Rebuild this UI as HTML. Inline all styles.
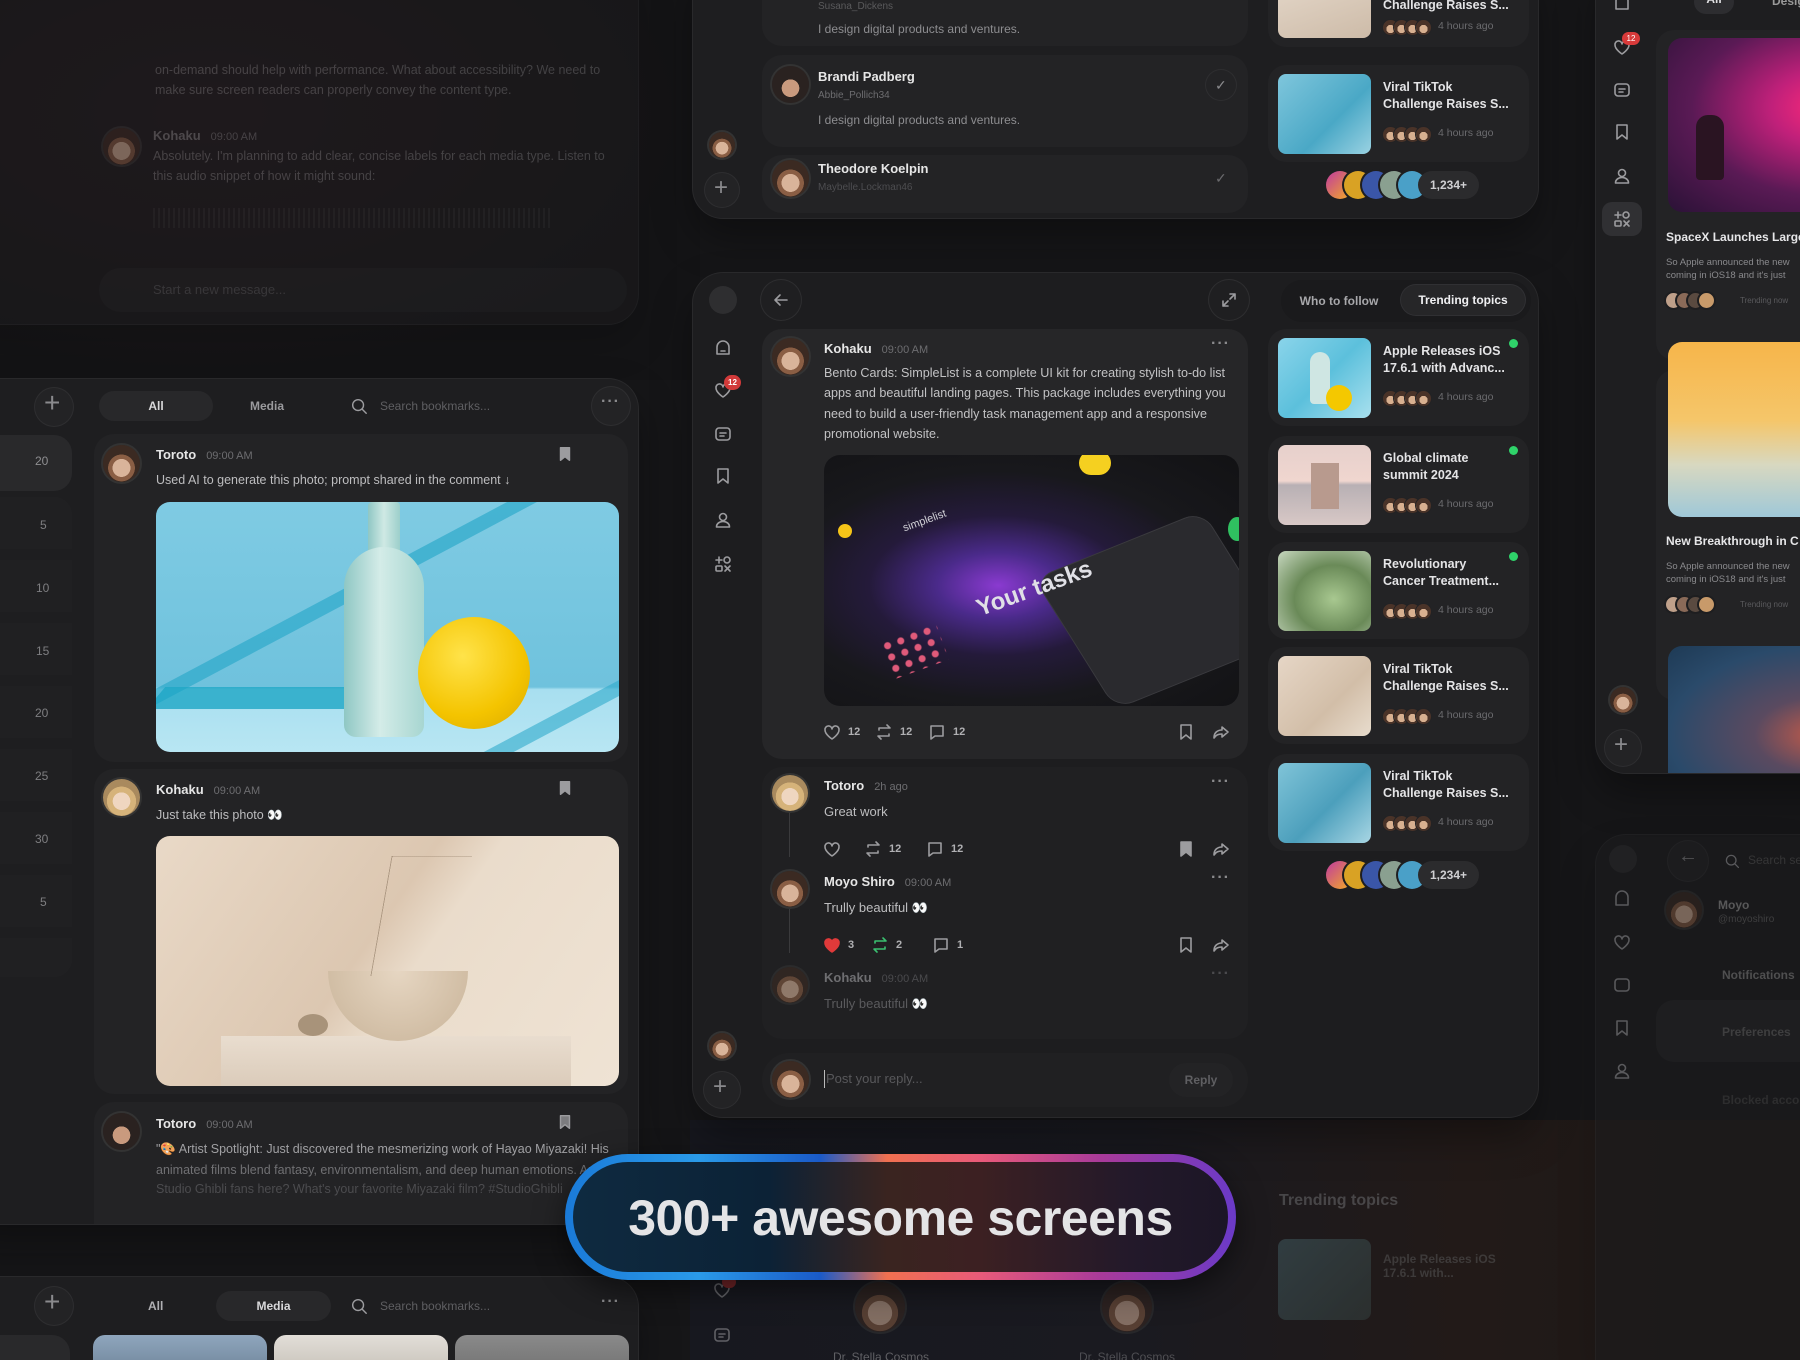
<!DOCTYPE html>
<html><head><meta charset="utf-8"><style>
*{box-sizing:border-box;margin:0;padding:0}
html,body{width:1800px;height:1360px;overflow:hidden;background:#161618}
body{font-family:"Liberation Sans",sans-serif;color:#e8e8e8}
#root{position:relative;width:1800px;height:1360px;overflow:hidden;background:#161618}
.a{position:absolute}
.panel{position:absolute;background:#1e1e20;border-radius:30px;box-shadow:0 0 0 1px #29292b,0 20px 40px rgba(0,0,0,.35)}
.card{position:absolute;background:#262628;border-radius:20px}
.av{position:absolute;border-radius:50%;background:radial-gradient(circle at 50% 62%,#d9b49a 0 30%,#8a5e44 31% 45%,#3b2a22 46%);box-shadow:0 0 0 2px #333}
.av2{background:radial-gradient(circle at 50% 60%,#efd6c0 0 30%,#d6b37a 31% 50%,#a98a5e 51%)}
.av3{background:radial-gradient(circle at 50% 60%,#c99a7e 0 30%,#2a2220 31%)}
.nm{position:absolute;font-size:13px;font-weight:bold;color:#e6e6e6;white-space:nowrap}
.tm{font-weight:normal;color:#6d6d70;font-size:11px;margin-left:10px}
.tx{position:absolute;font-size:13px;color:#bdbdbf;line-height:20px;white-space:nowrap}
.ic{position:absolute;width:20px;height:20px;fill:none;stroke:#9c9c9f;stroke-width:1.6;stroke-linecap:round;stroke-linejoin:round}
.cnt{position:absolute;font-size:11px;font-weight:bold;color:#b0b0b3}
.dots{position:absolute;color:#8a8a8d;font-size:16px;letter-spacing:1px;font-weight:bold}
.circ{position:absolute;border-radius:50%;background:#232325;box-shadow:0 0 0 1px #2e2e30}
.tc{position:absolute;background:#232325;border-radius:18px;width:261px;height:97px}
.th{position:absolute;left:10px;top:9px;width:93px;height:80px;border-radius:8px}
.tt{position:absolute;left:115px;top:14px;font-size:12.5px;font-weight:bold;color:#e4e4e6;line-height:17px}
.ts{position:absolute;left:115px;top:62px;width:48px;height:15px}
.ts i{position:absolute;top:0;width:15px;height:15px;border-radius:50%;background:radial-gradient(circle at 50% 60%,#d8b090 0 35%,#4a3328 36%);box-shadow:0 0 0 1px #232325}
.tg{position:absolute;left:170px;top:62px;font-size:10.5px;color:#6b6b6e}
.gd{position:absolute;right:11px;top:10px;width:9px;height:9px;border-radius:50%;background:#2fd36a}
.stk{position:absolute;height:28px}
.stk i{position:absolute;top:0;width:28px;height:28px;border-radius:50%;box-shadow:0 0 0 2px #1e1e20}
.stk b{position:absolute;top:0;height:28px;line-height:28px;padding:0 12px;border-radius:14px;background:#2b2b2d;font-size:12px;color:#cfcfd2}
</style></head><body><div id="root">

<div class="a" style="left:0;top:0;width:700px;height:380px;background:radial-gradient(ellipse at 30% 30%,#22181c,#141416 70%)"></div>
<div class="a" style="left:690px;top:1120px;width:1110px;height:240px;background:linear-gradient(90deg,#17181f 0%,#1a1a20 40%,#221a18 70%,#1c1816 100%)"></div>

<!-- TOP-LEFT chat panel (faded) -->
<div class="panel" style="left:-40px;top:-40px;width:678px;height:364px;background:#1c1b1d;opacity:.5">
  <div class="a" style="left:190px;top:0;width:430px;height:40px;background:#2a2a2c;border-radius:0 0 20px 20px"></div>
  <div class="tx" style="left:195px;top:100px;color:#6e6e70;font-size:12.5px;line-height:20px">on-demand should help with performance. What about accessibility? We need to<br>make sure screen readers can properly convey the content type.</div>
  <div class="av" style="left:143px;top:168px;width:37px;height:37px"></div>
  <div class="nm" style="left:193px;top:168px;color:#7a7a7c">Kohaku<span class="tm">09:00 AM</span></div>
  <div class="tx" style="left:193px;top:186px;color:#6e6e70;font-size:12.5px">Absolutely. I'm planning to add clear, concise labels for each media type. Listen to<br>this audio snippet of how it might sound:</div>
  <div class="a" style="left:193px;top:248px;width:400px;height:20px;background:repeating-linear-gradient(90deg,#3a3a3c 0 2px,transparent 2px 5px);opacity:.5"></div>
  <div class="a" style="left:139px;top:308px;width:528px;height:44px;background:#232325;border-radius:22px"></div>
  <div class="tx" style="left:193px;top:320px;color:#58585a">Start a new message...</div>
</div>

<!-- TOP-CENTER panel -->
<div class="panel" style="left:693px;top:-40px;width:845px;height:258px">
  <div class="card" style="left:69px;top:0;width:486px;height:86px;background:#232325"></div>
  <div class="tx" style="left:125px;top:59px;color:#8d8d90;font-size:12px">I design digital products and ventures.</div>
  <div class="tx" style="left:125px;top:37px;color:#5a5a5c;font-size:10px">Susana_Dickens</div>
  <div class="card" style="left:69px;top:95px;width:486px;height:92px;background:#232325"></div>
  <div class="av3 av" style="left:79px;top:106px;width:37px;height:37px"></div>
  <div class="nm" style="left:125px;top:109px">Brandi Padberg</div>
  <div class="tx" style="left:125px;top:126px;color:#6d6d70;font-size:10px">Abbie_Pollich34</div>
  <div class="tx" style="left:125px;top:150px;color:#8d8d90;font-size:12px">I design digital products and ventures.</div>
  <div class="circ" style="left:513px;top:110px;width:30px;height:30px"></div>
  <div class="a" style="left:522px;top:117px;color:#8a8a8d;font-size:14px">✓</div>
  <div class="card" style="left:69px;top:195px;width:486px;height:58px;background:#232325"></div>
  <div class="av" style="left:79px;top:200px;width:37px;height:37px"></div>
  <div class="nm" style="left:125px;top:201px">Theodore Koelpin</div>
  <div class="tx" style="left:125px;top:218px;color:#4d4d50;font-size:10px">Maybelle.Lockman46</div>
  <div class="a" style="left:522px;top:210px;color:#6a6a6d;font-size:14px">✓</div>
  <div class="av" style="left:16px;top:172px;width:26px;height:26px"></div>
  <div class="circ" style="left:12px;top:213px;width:34px;height:34px"></div>
  <div class="a" style="left:21px;top:214px;color:#8a8a8d;font-size:24px;font-weight:300">+</div>
  <div class="tc" style="left:575px;top:0;height:87px"><div class="th" style="top:0;height:78px;background:linear-gradient(160deg,#e9ddd0,#cdbba8)"></div><div class="tt" style="top:37px">Challenge Raises S...</div><div class="ts" style="top:60px"><i style="left:0"></i><i style="left:11px"></i><i style="left:22px"></i><i style="left:33px"></i></div><div class="tg" style="top:60px">4 hours ago</div></div>
  <div class="tc" style="left:575px;top:105px"><div class="th" style="background:linear-gradient(135deg,#7fc6dc,#4aa8c6 60%,#9ad2e2)"></div><div class="tt">Viral TikTok<br>Challenge Raises S...</div><div class="ts"><i style="left:0"></i><i style="left:11px"></i><i style="left:22px"></i><i style="left:33px"></i></div><div class="tg">4 hours ago</div></div>
  <div class="stk" style="left:633px;top:211px;width:180px"><i style="left:0;background:linear-gradient(135deg,#c03aa0,#f5b020)"></i><i style="left:18px;background:#d9a224"></i><i style="left:36px;background:#3a56a8"></i><i style="left:54px;background:#8aa090"></i><i style="left:72px;background:#4aa0c8"></i><b style="left:92px">1,234+</b></div>
</div>

<!-- LEFT bookmarks panel -->
<div class="panel" style="left:-40px;top:379px;width:678px;height:845px">
  <div class="a" style="left:0;top:56px;width:112px;height:56px;background:#29292b;border-radius:0 18px 18px 0"></div>
  <div class="a" style="left:0;top:118px;width:112px;height:480px;background:repeating-linear-gradient(180deg,#212123 0 52px,transparent 52px 63px);border-radius:0 18px 18px 0;opacity:.8"></div>
  <div class="a" style="left:75px;top:75px;font-size:12px;color:#8e8e91">20</div>
  <div class="a" style="left:80px;top:139px;font-size:12px;color:#7e7e81">5</div>
  <div class="a" style="left:76px;top:202px;font-size:12px;color:#7e7e81">10</div>
  <div class="a" style="left:76px;top:265px;font-size:12px;color:#7e7e81">15</div>
  <div class="a" style="left:75px;top:327px;font-size:12px;color:#7e7e81">20</div>
  <div class="a" style="left:75px;top:390px;font-size:12px;color:#7e7e81">25</div>
  <div class="a" style="left:75px;top:453px;font-size:12px;color:#7e7e81">30</div>
  <div class="a" style="left:80px;top:516px;font-size:12px;color:#7e7e81">5</div>
  <div class="circ" style="left:75px;top:9px;width:38px;height:38px"></div>
  <div class="a" style="left:84px;top:8px;color:#8a8a8d;font-size:28px;font-weight:300">+</div>
  <div class="a" style="left:139px;top:12px;width:114px;height:30px;background:#28282a;border-radius:15px;text-align:center;line-height:30px;font-size:12px;font-weight:bold;color:#d8d8da">All</div>
  <div class="a" style="left:290px;top:20px;font-size:12px;font-weight:bold;color:#9a9a9d">Media</div>
  <svg class="ic" style="left:390px;top:18px;width:18px;height:18px" viewBox="0 0 20 20"><circle cx="9" cy="9" r="6"/><path d="M14 14l4 4"/></svg>
  <div class="a" style="left:420px;top:20px;font-size:12px;color:#5f5f62">Search bookmarks...</div>
  <div class="circ" style="left:632px;top:8px;width:38px;height:38px"></div>
  <div class="dots" style="left:641px;top:14px">···</div>
  <div class="card" style="left:134px;top:55px;width:534px;height:328px;background:#232325"></div>
  <div class="av" style="left:143px;top:66px;width:37px;height:37px"></div>
  <div class="nm" style="left:196px;top:68px">Toroto<span class="tm">09:00 AM</span></div>
  <svg class="ic" style="left:596px;top:66px;width:18px;height:18px" viewBox="0 0 20 20"><path d="M5 3h10v14l-5-4-5 4z" fill="#9c9c9f"/></svg>
  <div class="tx" style="left:196px;top:91px;font-size:12.5px">Used AI to generate this photo; prompt shared in the comment ↓</div>
  <div class="a" style="left:196px;top:123px;width:463px;height:250px;border-radius:14px;overflow:hidden;background:linear-gradient(180deg,#7fcbe3 0%,#6fc2dd 74%,#a8dff0 75%,#b8e6f3 100%)">
    <div class="a" style="left:-40px;top:60px;width:560px;height:14px;background:#2eaacb;transform:rotate(-28deg);opacity:.7"></div>
    <div class="a" style="left:200px;top:170px;width:560px;height:14px;background:#2eaacb;transform:rotate(-28deg);opacity:.6"></div>
    <div class="a" style="left:0;top:185px;width:230px;height:22px;background:#1ea6c6;transform:skewX(-40deg);opacity:.8"></div>
    <div class="a" style="left:212px;top:0;width:32px;height:60px;background:linear-gradient(90deg,#8fc7c4,#cfe9e4,#9ccfcb);border-radius:4px"></div>
    <div class="a" style="left:188px;top:45px;width:80px;height:190px;background:linear-gradient(90deg,#8fc7c4,#d4ece8 45%,#a7d6d1);border-radius:40px 40px 12px 12px"></div>
    <div class="a" style="left:262px;top:115px;width:112px;height:112px;border-radius:50%;background:radial-gradient(circle at 40% 35%,#ffe34a,#f4c400 60%,#d9a800)"></div>
  </div>
  <div class="card" style="left:134px;top:390px;width:534px;height:325px;background:#232325"></div>
  <div class="av av2" style="left:143px;top:400px;width:37px;height:37px"></div>
  <div class="nm" style="left:196px;top:403px">Kohaku<span class="tm">09:00 AM</span></div>
  <svg class="ic" style="left:596px;top:400px;width:18px;height:18px" viewBox="0 0 20 20"><path d="M5 3h10v14l-5-4-5 4z" fill="#9c9c9f"/></svg>
  <div class="tx" style="left:196px;top:426px;font-size:12.5px">Just take this photo 👀</div>
  <div class="a" style="left:196px;top:457px;width:463px;height:250px;border-radius:14px;overflow:hidden;background:linear-gradient(125deg,#e9d9c7 0%,#dcc7b1 45%,#eadccb 55%,#efe3d4 100%)">
    <div class="a" style="left:65px;top:200px;width:350px;height:60px;background:linear-gradient(180deg,#e9ddcf,#d8c8b6)"></div>
    <div class="a" style="left:172px;top:135px;width:140px;height:70px;background:radial-gradient(ellipse at 50% 0%,#e6d6c2,#c8b398);border-radius:0 0 70px 70px"></div>
    <div class="a" style="left:142px;top:178px;width:30px;height:22px;border-radius:50%;background:#a8937a"></div>
    <div class="a" style="left:225px;top:20px;width:80px;height:120px;border-left:1px solid #8a7660;border-top:1px dotted #8a7660;transform:skewX(-10deg);opacity:.6"></div>
  </div>
  <div class="card" style="left:134px;top:723px;width:534px;height:122px;background:#232325;border-radius:20px 20px 0 0"></div>
  <div class="av av3" style="left:143px;top:734px;width:37px;height:37px"></div>
  <div class="nm" style="left:196px;top:737px">Totoro<span class="tm">09:00 AM</span></div>
  <svg class="ic" style="left:596px;top:734px;width:18px;height:18px" viewBox="0 0 20 20"><path d="M5 3h10v14l-5-4-5 4z" fill="#7c7c7f"/></svg>
  <div class="tx" style="left:196px;top:760px;font-size:12.5px;color:#a0a0a3">"🎨 Artist Spotlight: Just discovered the mesmerizing work of Hayao Miyazaki! His</div>
  <div class="tx" style="left:196px;top:781px;font-size:12.5px;color:#707073">animated films blend fantasy, environmentalism, and deep human emotions. Any</div>
  <div class="tx" style="left:196px;top:800px;font-size:12.5px;color:#4c4c4f">Studio Ghibli fans here? What's your favorite Miyazaki film? #StudioGhibli</div>
</div>

<!-- BOTTOM-LEFT panel -->
<div class="panel" style="left:-40px;top:1277px;width:678px;height:83px;border-radius:30px 30px 0 0">
  <div class="circ" style="left:75px;top:10px;width:38px;height:38px"></div>
  <div class="a" style="left:84px;top:9px;color:#8a8a8d;font-size:28px;font-weight:300">+</div>
  <div class="a" style="left:188px;top:22px;font-size:12px;font-weight:bold;color:#b0b0b3">All</div>
  <div class="a" style="left:256px;top:14px;width:115px;height:30px;background:#28282a;border-radius:15px;text-align:center;line-height:30px;font-size:12px;font-weight:bold;color:#d8d8da">Media</div>
  <svg class="ic" style="left:390px;top:20px;width:18px;height:18px" viewBox="0 0 20 20"><circle cx="9" cy="9" r="6"/><path d="M14 14l4 4"/></svg>
  <div class="a" style="left:420px;top:22px;font-size:12px;color:#5f5f62">Search bookmarks...</div>
  <div class="dots" style="left:641px;top:16px">···</div>
  <div class="a" style="left:0;top:58px;width:110px;height:25px;background:#29292b;border-radius:0 18px 0 0"></div>
  <div class="a" style="left:133px;top:58px;width:174px;height:25px;background:linear-gradient(#8fa6bd,#7a90a6);border-radius:12px 12px 0 0"></div>
  <div class="a" style="left:314px;top:58px;width:174px;height:25px;background:linear-gradient(#e2ded8,#d0cbc3);border-radius:12px 12px 0 0"></div>
  <div class="a" style="left:495px;top:58px;width:174px;height:25px;background:linear-gradient(#8a8a8a,#7a7a7a);border-radius:12px 12px 0 0"></div>
</div>

<!-- BOTTOM-CENTER area (behind banner, faded) -->
<div class="a" style="left:693px;top:1140px;width:845px;height:220px;opacity:.55;overflow:hidden">
  <svg class="ic" style="left:19px;top:140px" viewBox="0 0 20 20"><path d="M10 17s-7-4.5-7-9a3.5 3.5 0 0 1 7-1 3.5 3.5 0 0 1 7 1c0 4.5-7 9-7 9z"/></svg>
  <div class="a" style="left:29px;top:136px;width:14px;height:12px;border-radius:6px;background:#c03030"></div>
  <svg class="ic" style="left:19px;top:185px" viewBox="0 0 20 20"><rect x="3" y="4" width="14" height="12" rx="3"/><path d="M7 9h6M7 12h4"/></svg>
  <div class="av" style="left:162px;top:142px;width:50px;height:50px"></div>
  <div class="av" style="left:409px;top:142px;width:50px;height:50px"></div>
  <div class="a" style="left:140px;top:210px;font-size:12px;color:#9a9a9d">Dr. Stella Cosmos</div>
  <div class="a" style="left:386px;top:210px;font-size:12px;color:#7a7a7d">Dr. Stella Cosmos</div>
  <div class="a" style="left:586px;top:52px;font-size:16px;font-weight:bold;color:#6a6a6d">Trending topics</div>
  <div class="a" style="left:585px;top:99px;width:93px;height:81px;border-radius:8px;background:linear-gradient(135deg,#4a6a70,#3a4a48);opacity:.8"></div>
  <div class="a" style="left:690px;top:112px;font-size:12px;color:#555;font-weight:bold">Apple Releases iOS<br>17.6.1 with...</div>
</div>

<!-- RIGHT panel -->
<div class="panel" style="left:1596px;top:-40px;width:260px;height:813px">
  <svg class="ic" style="left:16px;top:32px" viewBox="0 0 20 20"><path d="M4 9a6 6 0 0 1 12 0v8H4z"/></svg>
  <svg class="ic" style="left:16px;top:77px" viewBox="0 0 20 20"><path d="M10 17s-7-4.5-7-9a3.5 3.5 0 0 1 7-1 3.5 3.5 0 0 1 7 1c0 4.5-7 9-7 9z"/></svg>
  <div class="a" style="left:26px;top:72px;width:18px;height:13px;border-radius:7px;background:#d83a3a;font-size:8px;line-height:13px;text-align:center;color:#fff">12</div>
  <svg class="ic" style="left:16px;top:120px" viewBox="0 0 20 20"><rect x="3" y="4" width="14" height="12" rx="3"/><path d="M7 9h6M7 12h4"/></svg>
  <svg class="ic" style="left:16px;top:162px" viewBox="0 0 20 20"><path d="M5 3h10v14l-5-4-5 4z"/></svg>
  <svg class="ic" style="left:16px;top:206px" viewBox="0 0 20 20"><circle cx="10" cy="7" r="3.5"/><path d="M3.5 17c0-3.5 3-5.5 6.5-5.5s6.5 2 6.5 5.5z"/></svg>
  <div class="a" style="left:6px;top:242px;width:40px;height:34px;border-radius:10px;background:#303033"></div>
  <svg class="ic" style="left:16px;top:249px" viewBox="0 0 20 20"><path d="M3 6h6M6 3v6"/><circle cx="14" cy="6" r="3"/><rect x="3" y="12" width="6" height="5" rx="1"/><path d="M12 12l5 5M17 12l-5 5"/></svg>
  <div class="av" style="left:14px;top:727px;width:26px;height:26px"></div>
  <div class="circ" style="left:9px;top:770px;width:36px;height:36px"></div>
  <div class="a" style="left:18px;top:771px;color:#8a8a8d;font-size:24px;font-weight:300">+</div>
  <div class="a" style="left:98px;top:30px;width:40px;height:24px;border-radius:12px;background:#2d2d30;text-align:center;font-size:12px;font-weight:bold;line-height:18px;color:#e0e0e2">All</div>
  <div class="a" style="left:176px;top:34px;font-size:12px;font-weight:bold;color:#999">Design</div>
  <div class="a" style="left:60px;top:70px;width:200px;height:330px;background:#232325;border-radius:18px 0 0 18px"></div>
  <div class="a" style="left:72px;top:78px;width:188px;height:174px;border-radius:14px 0 0 14px;background:radial-gradient(ellipse at 85% 40%,#ff2a7a 0%,#c0207a 25%,#5a1a55 60%,#2a1236 100%)"></div>
  <div class="a" style="left:100px;top:155px;width:28px;height:65px;border-radius:12px 12px 4px 4px;background:#2a1422"></div>
  <div class="a" style="left:70px;top:270px;font-size:12px;font-weight:bold;color:#e6e6e8;white-space:nowrap">SpaceX Launches Large</div>
  <div class="a" style="left:70px;top:296px;font-size:9.5px;color:#8a8a8d;line-height:13px;white-space:nowrap">So Apple announced the new<br>coming in iOS18 and it's just</div>
  <div class="stk" style="left:70px;top:333px;width:60px;height:15px"><i style="left:0;width:15px;height:15px;background:#bfa08a"></i><i style="left:11px;width:15px;height:15px;background:#8a6a58"></i><i style="left:22px;width:15px;height:15px;background:#5a4a40"></i><i style="left:33px;width:15px;height:15px;background:#c89a6a"></i></div>
  <div class="a" style="left:144px;top:336px;font-size:8px;color:#5a5a5d">Trending now</div>
  <div class="a" style="left:60px;top:410px;width:200px;height:330px;background:#232325;border-radius:18px 0 0 18px"></div>
  <div class="a" style="left:72px;top:382px;width:188px;height:175px;border-radius:14px 0 0 14px;background:linear-gradient(180deg,#f6b54a 0%,#f5c66a 45%,#d8d8c0 70%,#9fc8d8 100%)"></div>
  <div class="a" style="left:225px;top:440px;width:35px;height:80px;border-radius:14px 0 0 14px;background:linear-gradient(#e08a2a,#b05a18)"></div>
  <div class="a" style="left:70px;top:574px;font-size:12px;font-weight:bold;color:#e6e6e8;white-space:nowrap">New Breakthrough in C</div>
  <div class="a" style="left:70px;top:600px;font-size:9.5px;color:#8a8a8d;line-height:13px;white-space:nowrap">So Apple announced the new<br>coming in iOS18 and it's just</div>
  <div class="stk" style="left:70px;top:637px;width:60px;height:15px"><i style="left:0;width:15px;height:15px;background:#bfa08a"></i><i style="left:11px;width:15px;height:15px;background:#8a6a58"></i><i style="left:22px;width:15px;height:15px;background:#5a4a40"></i><i style="left:33px;width:15px;height:15px;background:#c89a6a"></i></div>
  <div class="a" style="left:144px;top:640px;font-size:8px;color:#5a5a5d">Trending now</div>
  <div class="a" style="left:72px;top:686px;width:188px;height:127px;border-radius:14px 0 0 0;background:radial-gradient(ellipse at 80% 70%,#c05a4a 0%,#5a4a60 30%,#2a4a6a 70%,#1e3a55 100%)"></div>
</div>

<!-- RIGHT lower panel (faded) -->
<div class="panel" style="left:1596px;top:835px;width:204px;height:525px;border-radius:30px 0 0 0;background:#1c1c1e;opacity:.5;overflow:hidden">
  <div class="a" style="left:13px;top:10px;width:28px;height:28px;border-radius:50%;background:#2c2c2e"></div>
  <div class="circ" style="left:72px;top:6px;width:40px;height:40px"></div>
  <div class="a" style="left:82px;top:10px;color:#8a8a8d;font-size:20px">←</div>
  <svg class="ic" style="left:128px;top:18px;width:16px;height:16px" viewBox="0 0 20 20"><circle cx="9" cy="9" r="6"/><path d="M14 14l4 4"/></svg>
  <div class="a" style="left:152px;top:18px;font-size:12px;color:#555;white-space:nowrap">Search settings</div>
  <div class="av" style="left:70px;top:57px;width:36px;height:36px"></div>
  <div class="a" style="left:122px;top:63px;font-size:12px;font-weight:bold;color:#999">Moyo</div>
  <div class="a" style="left:122px;top:79px;font-size:10px;color:#666">@moyoshiro</div>
  <div class="a" style="left:126px;top:133px;font-size:12px;font-weight:bold;color:#888">Notifications</div>
  <div class="a" style="left:60px;top:165px;width:150px;height:62px;border-radius:18px 0 0 18px;background:#262628"></div>
  <div class="a" style="left:126px;top:190px;font-size:12px;font-weight:bold;color:#666">Preferences</div>
  <div class="a" style="left:126px;top:258px;font-size:12px;font-weight:bold;color:#444;white-space:nowrap">Blocked accounts</div>
  <svg class="ic" style="left:16px;top:53px" viewBox="0 0 20 20"><path d="M4 9a6 6 0 0 1 12 0v8H4z"/></svg>
  <svg class="ic" style="left:16px;top:97px" viewBox="0 0 20 20"><path d="M10 17s-7-4.5-7-9a3.5 3.5 0 0 1 7-1 3.5 3.5 0 0 1 7 1c0 4.5-7 9-7 9z"/></svg>
  <svg class="ic" style="left:16px;top:140px" viewBox="0 0 20 20"><rect x="3" y="4" width="14" height="12" rx="3"/></svg>
  <svg class="ic" style="left:16px;top:183px" viewBox="0 0 20 20"><path d="M5 3h10v14l-5-4-5 4z"/></svg>
  <svg class="ic" style="left:16px;top:226px" viewBox="0 0 20 20"><circle cx="10" cy="7" r="3.5"/><path d="M3.5 17c0-3.5 3-5.5 6.5-5.5s6.5 2 6.5 5.5z"/></svg>
</div>

<!-- MAIN CENTER panel -->
<div class="panel" style="left:693px;top:273px;width:845px;height:844px;background:#1d1d1f">
  <div class="a" style="left:16px;top:13px;width:28px;height:28px;border-radius:50%;background:#2e2e30"></div>
  <div class="circ" style="left:68px;top:7px;width:40px;height:40px;background:#1f1f21"></div>
  <svg class="ic" style="left:78px;top:17px" viewBox="0 0 20 20"><path d="M16 10H4M9 5l-5 5 5 5"/></svg>
  <div class="circ" style="left:516px;top:7px;width:40px;height:40px;background:#1f1f21"></div>
  <svg class="ic" style="left:526px;top:17px" viewBox="0 0 20 20"><path d="M11 4h5v5M16 4l-5 5M9 16H4v-5M4 16l5-5"/></svg>
  <div class="a" style="left:588px;top:7px;width:250px;height:42px;border-radius:21px;background:#1a1a1c"></div>
  <div class="a" style="left:596px;top:21px;font-size:12px;font-weight:bold;color:#a8a8ab;width:100px;text-align:center;white-space:nowrap">Who to follow</div>
  <div class="a" style="left:708px;top:12px;width:124px;height:30px;border-radius:15px;background:#262628;box-shadow:0 0 0 1px #303033;text-align:center;line-height:30px;font-size:12px;font-weight:bold;color:#f0f0f2">Trending topics</div>

  <svg class="ic" style="left:20px;top:64px" viewBox="0 0 20 20"><path d="M4 10a6 6 0 0 1 12 0v7H4zM8 14h4"/></svg>
  <svg class="ic" style="left:20px;top:107px" viewBox="0 0 20 20"><path d="M10 17s-7-4.5-7-9a3.5 3.5 0 0 1 7-1 3.5 3.5 0 0 1 7 1c0 4.5-7 9-7 9z"/></svg>
  <div class="a" style="left:31px;top:102px;width:17px;height:15px;border-radius:8px;background:#d23a3a;font-size:8px;line-height:15px;text-align:center;color:#fff;font-weight:bold">12</div>
  <svg class="ic" style="left:20px;top:151px" viewBox="0 0 20 20"><rect x="3" y="4" width="14" height="12" rx="3"/><path d="M7 9h6M7 12h4"/></svg>
  <svg class="ic" style="left:20px;top:193px" viewBox="0 0 20 20"><path d="M5 3h10v14l-5-4-5 4z"/></svg>
  <svg class="ic" style="left:20px;top:237px" viewBox="0 0 20 20"><circle cx="10" cy="7" r="3.5"/><path d="M3.5 17c0-3.5 3-5.5 6.5-5.5s6.5 2 6.5 5.5z"/></svg>
  <svg class="ic" style="left:20px;top:281px" viewBox="0 0 20 20"><path d="M3 6h6M6 3v6"/><circle cx="14" cy="6" r="3"/><rect x="3" y="12" width="6" height="5" rx="1"/><path d="M12 12l5 5M17 12l-5 5"/></svg>
  <div class="av" style="left:16px;top:760px;width:26px;height:26px"></div>
  <div class="circ" style="left:11px;top:799px;width:36px;height:36px"></div>
  <div class="a" style="left:20px;top:800px;color:#8a8a8d;font-size:24px;font-weight:300">+</div>

  <div class="card" style="left:69px;top:56px;width:486px;height:430px"></div>
  <div class="av" style="left:79px;top:65px;width:37px;height:37px"></div>
  <div class="nm" style="left:131px;top:68px">Kohaku<span class="tm">09:00 AM</span></div>
  <div class="dots" style="left:518px;top:62px">···</div>
  <div class="tx" style="left:131px;top:90px;font-size:12.6px;line-height:20.3px;color:#c2c2c4">Bento Cards: SimpleList is a complete UI kit for creating stylish to-do list<br>apps and beautiful landing pages. This package includes everything you<br>need to build a user-friendly task management app and a responsive<br>promotional website.</div>
  <div class="a" style="left:131px;top:182px;width:415px;height:251px;border-radius:16px;overflow:hidden;background:radial-gradient(ellipse at 42% 52%,#8a3ad0 0%,#4a2a8a 18%,#241a3a 38%,#18181c 62%,#121214 100%)">
    <div class="a" style="left:245px;top:80px;width:180px;height:150px;background:#2a2a2e;border-radius:18px;transform:rotate(-22deg) skewX(10deg);box-shadow:0 0 0 1px #3a3a3e"></div>
    <div class="a" style="left:150px;top:120px;color:#e0e0e6;font-size:24px;font-weight:bold;transform:rotate(-20deg)">Your tasks</div>
    <div class="a" style="left:78px;top:60px;color:#d0d0d6;font-size:11px;transform:rotate(-20deg)">simplelist</div>
    <div class="a" style="left:255px;top:-4px;width:32px;height:24px;border-radius:12px;background:#f5d020"></div>
    <div class="a" style="left:14px;top:69px;width:14px;height:14px;border-radius:50%;background:#f5c418"></div>
    <div class="a" style="left:404px;top:62px;width:18px;height:24px;border-radius:50%;background:#2fc060"></div>
    <div class="a" style="left:60px;top:176px;width:60px;height:40px;background:radial-gradient(circle,#e05a7a 3px,transparent 4px) 0 0/14px 12px;transform:rotate(-20deg)"></div>
  </div>
  <svg class="ic" style="left:129px;top:449px" viewBox="0 0 20 20"><path d="M10 17s-7-4.5-7-9a3.5 3.5 0 0 1 7-1 3.5 3.5 0 0 1 7 1c0 4.5-7 9-7 9z"/></svg>
  <div class="cnt" style="left:155px;top:453px">12</div>
  <svg class="ic" style="left:181px;top:449px" viewBox="0 0 20 20"><path d="M5 8V6h11l-3-3M15 12v2H4l3 3"/></svg>
  <div class="cnt" style="left:207px;top:453px">12</div>
  <svg class="ic" style="left:234px;top:449px" viewBox="0 0 20 20"><path d="M4 4h12v10H8l-4 3z"/></svg>
  <div class="cnt" style="left:260px;top:453px">12</div>
  <svg class="ic" style="left:483px;top:449px" viewBox="0 0 20 20"><path d="M5 3h10v14l-5-4-5 4z"/></svg>
  <svg class="ic" style="left:518px;top:449px" viewBox="0 0 20 20"><path d="M11 5l6 5-6 5v-3c-4 0-6 1-8 4 0-5 3-8 8-8z"/></svg>

  <div class="card" style="left:69px;top:494px;width:486px;height:272px;background:#202022"></div>
  <div class="a" style="left:96px;top:540px;width:1px;height:44px;background:#3a3a3c"></div>
  <div class="a" style="left:96px;top:636px;width:1px;height:44px;background:#3a3a3c"></div>
  <div class="av av2" style="left:79px;top:502px;width:36px;height:36px"></div>
  <div class="nm" style="left:131px;top:505px">Totoro<span class="tm">2h ago</span></div>
  <div class="dots" style="left:518px;top:500px">···</div>
  <div class="tx" style="left:131px;top:529px">Great work</div>
  <svg class="ic" style="left:129px;top:566px" viewBox="0 0 20 20"><path d="M10 17s-7-4.5-7-9a3.5 3.5 0 0 1 7-1 3.5 3.5 0 0 1 7 1c0 4.5-7 9-7 9z"/></svg>
  <svg class="ic" style="left:170px;top:566px" viewBox="0 0 20 20"><path d="M5 8V6h11l-3-3M15 12v2H4l3 3"/></svg>
  <div class="cnt" style="left:196px;top:570px">12</div>
  <svg class="ic" style="left:232px;top:566px" viewBox="0 0 20 20"><path d="M4 4h12v10H8l-4 3z"/></svg>
  <div class="cnt" style="left:258px;top:570px">12</div>
  <svg class="ic" style="left:483px;top:566px" viewBox="0 0 20 20"><path d="M5 3h10v14l-5-4-5 4z" fill="#9c9c9f"/></svg>
  <svg class="ic" style="left:518px;top:566px" viewBox="0 0 20 20"><path d="M11 5l6 5-6 5v-3c-4 0-6 1-8 4 0-5 3-8 8-8z"/></svg>

  <div class="av" style="left:79px;top:598px;width:36px;height:36px"></div>
  <div class="nm" style="left:131px;top:601px">Moyo Shiro<span class="tm">09:00 AM</span></div>
  <div class="dots" style="left:518px;top:596px">···</div>
  <div class="tx" style="left:131px;top:625px">Trully beautiful 👀</div>
  <svg class="ic" style="left:129px;top:662px;stroke:#e03a3a" viewBox="0 0 20 20"><path d="M10 17s-7-4.5-7-9a3.5 3.5 0 0 1 7-1 3.5 3.5 0 0 1 7 1c0 4.5-7 9-7 9z" fill="#e03a3a"/></svg>
  <div class="cnt" style="left:155px;top:666px">3</div>
  <svg class="ic" style="left:177px;top:662px;stroke:#3ac070" viewBox="0 0 20 20"><path d="M5 8V6h11l-3-3M15 12v2H4l3 3"/></svg>
  <div class="cnt" style="left:203px;top:666px">2</div>
  <svg class="ic" style="left:238px;top:662px" viewBox="0 0 20 20"><path d="M4 4h12v10H8l-4 3z"/></svg>
  <div class="cnt" style="left:264px;top:666px">1</div>
  <svg class="ic" style="left:483px;top:662px" viewBox="0 0 20 20"><path d="M5 3h10v14l-5-4-5 4z"/></svg>
  <svg class="ic" style="left:518px;top:662px" viewBox="0 0 20 20"><path d="M11 5l6 5-6 5v-3c-4 0-6 1-8 4 0-5 3-8 8-8z"/></svg>

  <div class="av" style="left:79px;top:694px;width:36px;height:36px;opacity:.6"></div>
  <div class="nm" style="left:131px;top:697px;color:#6e6e71">Kohaku<span class="tm" style="color:#4a4a4d">09:00 AM</span></div>
  <div class="dots" style="left:518px;top:692px;color:#4a4a4d">···</div>
  <div class="tx" style="left:131px;top:721px;color:#5a5a5d">Trully beautiful 👀</div>

  <div class="a" style="left:69px;top:780px;width:486px;height:54px;border-radius:27px;background:#202022"></div>
  <div class="av" style="left:79px;top:788px;width:37px;height:37px"></div>
  <div class="a" style="left:131px;top:797px;width:1px;height:18px;background:#bbb"></div>
  <div class="tx" style="left:133px;top:796px;color:#58585b">Post your reply...</div>
  <div class="a" style="left:476px;top:790px;width:64px;height:34px;border-radius:17px;background:#232325;text-align:center;line-height:34px;font-size:12px;font-weight:bold;color:#5f5f62">Reply</div>

  <div class="tc" style="left:575px;top:56px"><div class="th" style="background:linear-gradient(135deg,#8ad4ea,#5cc0dc 50%,#a8e0ee)"><div class="a" style="left:32px;top:14px;width:20px;height:52px;border-radius:10px 10px 4px 4px;background:#cfe6e3"></div><div class="a" style="left:48px;top:47px;width:26px;height:26px;border-radius:50%;background:#f4c800"></div></div><div class="tt">Apple Releases iOS<br>17.6.1 with Advanc...</div><div class="ts"><i style="left:0"></i><i style="left:11px"></i><i style="left:22px"></i><i style="left:33px"></i></div><div class="tg">4 hours ago</div><div class="gd"></div></div>
  <div class="tc" style="left:575px;top:163px"><div class="th" style="background:linear-gradient(180deg,#e6d0cc 0%,#f0d6cf 45%,#b8b0b4 50%,#d8c8c6 100%)"><div class="a" style="left:33px;top:18px;width:28px;height:46px;background:#b89a8e"></div></div><div class="tt">Global climate<br>summit 2024</div><div class="ts"><i style="left:0"></i><i style="left:11px"></i><i style="left:22px"></i><i style="left:33px"></i></div><div class="tg">4 hours ago</div><div class="gd"></div></div>
  <div class="tc" style="left:575px;top:269px"><div class="th" style="background:radial-gradient(ellipse at 60% 60%,#a8c890,#6a8a58 50%,#c8d8c0)"></div><div class="tt">Revolutionary<br>Cancer Treatment...</div><div class="ts"><i style="left:0"></i><i style="left:11px"></i><i style="left:22px"></i><i style="left:33px"></i></div><div class="tg">4 hours ago</div><div class="gd"></div></div>
  <div class="tc" style="left:575px;top:374px"><div class="th" style="background:linear-gradient(135deg,#e6d6c6,#d2bea8 60%,#e8dccd)"></div><div class="tt">Viral TikTok<br>Challenge Raises S...</div><div class="ts"><i style="left:0"></i><i style="left:11px"></i><i style="left:22px"></i><i style="left:33px"></i></div><div class="tg">4 hours ago</div></div>
  <div class="tc" style="left:575px;top:481px"><div class="th" style="background:linear-gradient(135deg,#80c4d8,#4c9fbc 55%,#a8d6e4)"></div><div class="tt">Viral TikTok<br>Challenge Raises S...</div><div class="ts"><i style="left:0"></i><i style="left:11px"></i><i style="left:22px"></i><i style="left:33px"></i></div><div class="tg">4 hours ago</div></div>
  <div class="stk" style="left:633px;top:588px;width:180px"><i style="left:0;background:linear-gradient(135deg,#c03aa0,#f5b020)"></i><i style="left:18px;background:#d9a224"></i><i style="left:36px;background:#3a56a8"></i><i style="left:54px;background:#8aa090"></i><i style="left:72px;background:#4aa0c8"></i><b style="left:92px">1,234+</b></div>
</div>

<!-- BANNER -->
<div class="a" style="left:565px;top:1154px;width:671px;height:126px;border-radius:63px;background:linear-gradient(90deg,#1a7ad8 0%,#2a9ae8 20%,#1a5ac8 38%,#f07050 48%,#e85a7a 62%,#a83a9a 80%,#6a3ac8 100%);box-shadow:0 10px 30px rgba(0,0,0,.5)"></div>
<div class="a" style="left:573px;top:1162px;width:655px;height:110px;border-radius:55px;background:linear-gradient(90deg,#0e2a40 0%,#0c2236 30%,#3a2420 48%,#3c2022 62%,#23192a 85%,#1c1626 100%)"></div>
<div class="a" style="left:565px;top:1188px;width:671px;text-align:center;font-size:50px;font-weight:bold;color:#e4e4e6;letter-spacing:-0.5px;line-height:60px">300+ awesome screens</div>

</div></body></html>
